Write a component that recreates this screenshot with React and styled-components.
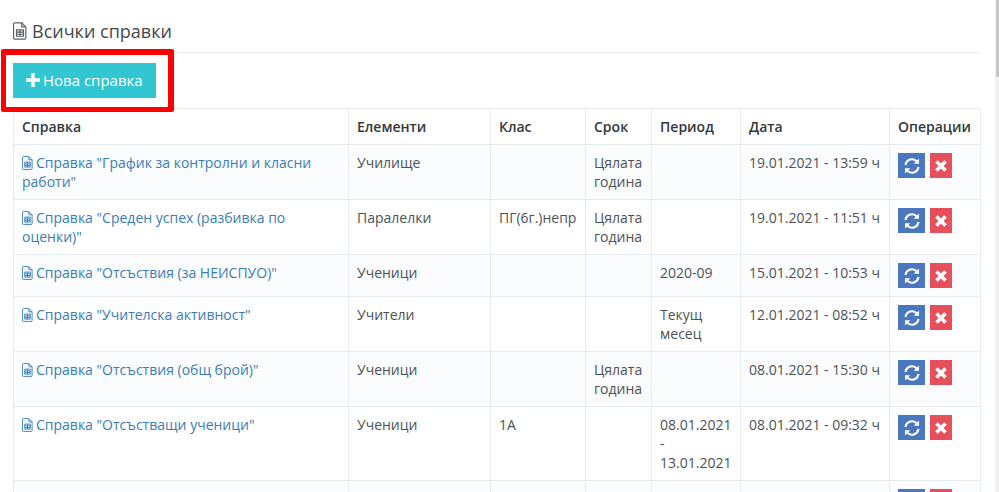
import React from 'react';
import styled, { createGlobalStyle } from 'styled-components';

const Global = createGlobalStyle`
  html, body { margin: 0; padding: 0; height: 492px; overflow: hidden; background: #fff; }
  body { font-family: "Open Sans", "Noto Sans", sans-serif; font-size: 14px; color: #3f4347; }
`;
const Page = styled.div`
  position: relative; display: flex; width: 999px; height: 492px; overflow: hidden;
`;
const Main = styled.main`
  flex: 1; min-width: 0; padding: 18px 15px 0 13px;
`;
const Scrollbar = styled.div`
  width: 4px; flex: none; background: #f1f1f1; position: relative;
`;
const Thumb = styled.div`
  position: absolute; top: 0; left: 1px; right: 0; height: 77px; background: #c6c6c6;
`;
const Title = styled.h3`
  margin: 0; display: flex; align-items: center; gap: 5px; font-weight: 400; font-size: 18px; line-height: 26px;
  color: #44484c; border-bottom: 1px solid #ebedf2; padding-bottom: 8px; height: 26px; box-sizing: content-box;
`;
const TitleIcon = styled.svg`
  flex: none; width: 14px; height: 18px;
`;
const Toolbar = styled.div`
  padding: 10px 0;
`;
const Button = styled.button`
  display: flex; align-items: center; gap: 3px; height: 35px; width: 143px; padding: 0 0 2px 13px; border: 0; background: #32c5d2; color: #fff;
  font: 400 15px "Open Sans", sans-serif;
`;
const RedBox = styled.div`
  position: absolute; left: 1px; top: 49px; width: 173px; height: 63px; box-sizing: border-box; border: solid #fe0000; border-width: 6px 6px 5px 5px; border-radius: 2px; pointer-events: none;
`;
const Table = styled.table`
  width: 967px; border-collapse: collapse; table-layout: fixed; font-size: 14px; line-height: 19px;
`;
const Th = styled.th`
  text-align: left; font-weight: 600; color: #34383c; padding: 8px 8px; border: 1px solid #e7ecf1; height: 19px; white-space: nowrap;
`;
const Row = styled.tr`
  background: ${p => (p.$odd ? '#fbfcfd' : '#fff')};
`;
const Td = styled.td`
  vertical-align: top; padding: 8px; border: 1px solid #e7ecf1; color: #4e5256;
`;
const ReportLink = styled.a`
  color: #3a7cb6; text-decoration: none;
`;
const LinkIcon = styled.svg`
  width: 11px; height: 14px; vertical-align: -2px; margin-right: 3px;
`;
const Ops = styled.div`
  display: flex; gap: 5px;
`;
const OpButton = styled.span`
  display: flex; align-items: center; justify-content: center; height: 25px; width: ${p => p.$w}px; background: ${p => p.$bg}; color: #fff;
`;

const docPaths = (
  <>
    <path d="M1.500.5h6l3.500 3.500v9.500a1 1 0 0 1-1 1H1.500a1 1 0 0 1-1-1v-12a1 1 0 0 1 1-1z" />
    <path d="M7.500.5v3.500H11" />
    <path d="M3 6.500h6v5.500H3zM3 8.500h6M3 10.300h6M6 6.500v5.500" />
  </>
);
const Refresh = () => (
  <svg width="16" height="16" viewBox="0 0 16 16" fill="none" stroke="#fff" strokeWidth="2.100">
    <path d="M1.500 7A6.600 6.600 0 0 1 13 3.600" />
    <path d="M14.500 9A6.600 6.600 0 0 1 3 12.400" />
    <path d="M15 .5v5.300H9.700z" fill="#fff" stroke="none" />
    <path d="M1 15.500v-5.300h5.300z" fill="#fff" stroke="none" />
  </svg>
);
const Cross = () => (
  <svg width="12" height="12" viewBox="0 0 12 12" stroke="#fff" strokeWidth="3.600">
    <path d="M1.500 1.500l9 9M10.500 1.500l-9 9" />
  </svg>
);
const Plus = () => (
  <svg width="14" height="14" viewBox="0 0 14 14" fill="#fff"><path d="M5.300 0h3.400v5.300H14v3.400H8.700V14H5.300V8.700H0V5.300h5.300z" /></svg>
);

const rows = [
  ['Справка "График за контролни и класни работи"', 'Училище', '', 'Цялата година', '', '19.01.2021 - 13:59 ч'],
  ['Справка "Среден успех (разбивка по оценки)"', 'Паралелки', 'ПГ(6г.)непр', 'Цялата година', '', '19.01.2021 - 11:51 ч'],
  ['Справка "Отсъствия (за НЕИСПУО)"', 'Ученици', '', '', '2020-09', '15.01.2021 - 10:53 ч'],
  ['Справка "Учителска активност"', 'Учители', '', '', 'Текущ месец', '12.01.2021 - 08:52 ч'],
  ['Справка "Отсъствия (общ брой)"', 'Ученици', '', 'Цялата година', '', '08.01.2021 - 15:30 ч'],
  ['Справка "Отсъстващи ученици"', 'Ученици', '1А', '', '08.01.2021 - 13.01.2021', '08.01.2021 - 09:32 ч'],
  ['Справка "Отсъствия (общ брой)"', 'Ученици', '', '', '', '07.01.2021 - 10:12 ч'],
];
const widths = [335, 142, 95, 66, 89, 149, 91];
const heads = ['Справка', 'Елементи', 'Клас', 'Срок', 'Период', 'Дата', 'Операции'];

export default function App() {
  return (
    <Page>
      <Global />
      <Main>
        <Title>
          <TitleIcon viewBox="0 0 12 15" fill="none" stroke="#5d6166" strokeWidth="1">{docPaths}</TitleIcon>
          Всички справки
        </Title>
        <Toolbar><Button><Plus />Нова справка</Button></Toolbar>
        <Table>
          <colgroup>{widths.map((w, i) => <col key={i} style={{ width: w }} />)}</colgroup>
          <thead><tr>{heads.map(h => <Th key={h}>{h}</Th>)}</tr></thead>
          <tbody>
            {rows.map((r, i) => (
              <Row key={i} $odd={i % 2 === 0}>
                <Td><ReportLink href="#"><LinkIcon viewBox="0 0 12 15" fill="none" stroke="#3a7cb6" strokeWidth="1">{docPaths}</LinkIcon>{r[0]}</ReportLink></Td>
                {r.slice(1).map((c, j) => <Td key={j}>{c}</Td>)}
                <Td><Ops>
                  <OpButton $w={27} $bg="#4b77be"><Refresh /></OpButton>
                  <OpButton $w={22} $bg="#e7505a"><Cross /></OpButton>
                </Ops></Td>
              </Row>
            ))}
          </tbody>
        </Table>
      </Main>
      <Scrollbar><Thumb /></Scrollbar>
      <RedBox />
    </Page>
  );
}
